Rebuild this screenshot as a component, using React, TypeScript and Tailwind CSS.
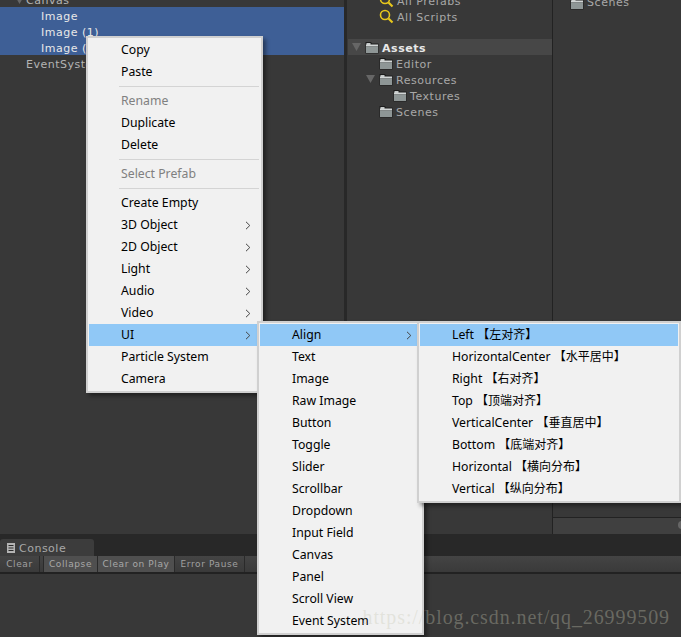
import React from "react";

const menuFont = "font-['Segoe_UI','Noto_Sans','Noto_Sans_CJK_SC',sans-serif]";

const mainMenu = [
  { label: "Copy" },
  { label: "Paste" },
  { sep: true },
  { label: "Rename", disabled: true },
  { label: "Duplicate" },
  { label: "Delete" },
  { sep: true },
  { label: "Select Prefab", disabled: true },
  { sep: true },
  { label: "Create Empty" },
  { label: "3D Object", arrow: true },
  { label: "2D Object", arrow: true },
  { label: "Light", arrow: true },
  { label: "Audio", arrow: true },
  { label: "Video", arrow: true },
  { label: "UI", arrow: true, active: true },
  { label: "Particle System" },
  { label: "Camera" },
];

const uiMenu = [
  { label: "Align", arrow: true, active: true },
  { label: "Text" },
  { label: "Image" },
  { label: "Raw Image" },
  { label: "Button" },
  { label: "Toggle" },
  { label: "Slider" },
  { label: "Scrollbar" },
  { label: "Dropdown" },
  { label: "Input Field" },
  { label: "Canvas" },
  { label: "Panel" },
  { label: "Scroll View" },
  { label: "Event System" },
];

const alignMenu = [
  { label: "Left ", cn: "【左对齐】", active: true },
  { label: "HorizontalCenter ", cn: "【水平居中】" },
  { label: "Right ", cn: "【右对齐】" },
  { label: "Top ", cn: "【顶端对齐】" },
  { label: "VerticalCenter ", cn: "【垂直居中】" },
  { label: "Bottom ", cn: "【底端对齐】" },
  { label: "Horizontal ", cn: "【横向分布】" },
  { label: "Vertical ", cn: "【纵向分布】" },
];

type Item = {
  label?: string;
  cn?: string;
  sep?: boolean;
  disabled?: boolean;
  arrow?: boolean;
  active?: boolean;
};

const Chevron = () => (
  <svg width="6" height="9" viewBox="0 0 6 9" fill="none" className="absolute right-[9px] top-[7px]">
    <path d="M1 0.8 L4.8 4.5 L1 8.2" stroke="#444" strokeWidth="1" />
  </svg>
);

const Menu = ({ items, className }: { items: Item[]; className: string }) => (
  <div
    className={`absolute border-2 border-[#d0d0d0] bg-[#f1f1f1] p-px shadow-[3px_3px_4px_rgba(0,0,0,0.4)] ${menuFont} ${className}`}
  >
    {items.map((item, i) =>
      item.sep ? (
        <div key={i} className="flex h-[7px] items-center pl-[30px] pr-px">
          <div className="h-px w-full bg-[#d4d4d4]" />
        </div>
      ) : (
        <div
          key={i}
          className={`relative h-[22px] whitespace-pre pl-[32px] text-[12.25px] leading-[22px] ${
            item.disabled ? "text-[#808080]" : "text-black"
          } ${item.active ? "bg-[#90c8f6]" : ""}`}
        >
          {item.label}
          {item.cn && <span className="text-[12px]">{item.cn}</span>}
          {item.arrow && <Chevron />}
        </div>
      )
    )}
  </div>
);

const Folder = () => (
  <svg width="14" height="13" viewBox="0 0 14 13" className="shrink-0">
    <path d="M0.5 1 H6 L7 2.5 H13.5 V12.5 H0.5 Z" fill="#1c1c1c" />
    <rect x="1.5" y="2" width="4" height="2" fill="#c4c8c8" />
    <rect x="1" y="3.5" width="12" height="2" fill="#d2d6d6" />
    <rect x="1" y="5.5" width="12" height="6.5" fill="#8e9696" />
  </svg>
);

const Search = () => (
  <svg width="15" height="15" viewBox="0 0 15 15" fill="none" className="shrink-0">
    <circle cx="6" cy="6" r="4.5" stroke="#e8c81c" strokeWidth="1.6" />
    <path d="M9.5 9.5 L13.5 13.5" stroke="#e8c81c" strokeWidth="2.2" />
  </svg>
);

const Tri = () => (
  <svg width="9" height="8" viewBox="0 0 9 8" className="shrink-0">
    <path d="M0 0 H9 L4.5 8 Z" fill="#666666" />
  </svg>
);

const TreeRow = ({ label, pad, selected }: { label: string; pad: string; selected?: boolean }) => (
  <div
    className={`h-[16px] text-[11px] leading-[19px] tracking-[0.5px] ${pad} ${
      selected ? "bg-[#3e5f96] text-[#e8e8e8]" : "text-[#b4b4b4]"
    }`}
  >
    {label}
  </div>
);

const FolderRow = ({
  label,
  pad,
  open,
  bold,
}: {
  label: string;
  pad: string;
  open?: boolean;
  bold?: boolean;
}) => (
  <div
    className={`flex h-[16px] items-center gap-[3px] text-[11px] tracking-[0.55px] ${pad} ${
      bold ? "bg-[#474747] font-bold text-[#e8e8e8]" : "text-[#a8a8a8]"
    }`}
  >
    {open && (
      <span className="mr-px -ml-[13px] flex">
        <Tri />
      </span>
    )}
    <Folder />
    <span className="pt-[4px]">{label}</span>
  </div>
);

const ToolButton = ({ label, on, className }: { label: string; on?: boolean; className: string }) => (
  <div
    className={`flex h-full items-center justify-center border-r border-[#2a2a2a] pt-px text-[9px] tracking-[0.6px] ${
      on ? "bg-[#4f4f4f] text-[#a8a8a8]" : "text-[#a0a0a0]"
    } ${className}`}
  >
    {label}
  </div>
);

export default function App() {
  return (
    <div className="relative flex h-[637px] w-[681px] flex-col overflow-hidden bg-[#383838] font-['DejaVu_Sans',sans-serif]">
      <div className="flex h-[535px] border-b border-[#282828]">
        <div className="-mt-[9px] w-[344px]">
          <div className="relative h-[16px] pl-[26px] text-[11px] leading-[19px] tracking-[0.5px] text-[#b4b4b4]">
            <span className="absolute left-[15px] top-[5px] flex">
              <Tri />
            </span>
            Canvas
          </div>
          <TreeRow label="Image" pad="pl-[41px]" selected />
          <TreeRow label="Image (1)" pad="pl-[41px]" selected />
          <TreeRow label="Image (2)" pad="pl-[41px]" selected />
          <TreeRow label="EventSystem" pad="pl-[26px]" />
        </div>
        <div className="w-[209px] border-r border-l-[3px] border-r-[#222222] border-l-[#282828] pl-px">
          <div className="-mt-[8px] flex h-[16px] items-center gap-[3px] pl-[31px] text-[11px] tracking-[0.55px] text-[#a8a8a8]">
            <Search />
            <span className="pt-[4px]">All Prefabs</span>
          </div>
          <div className="flex h-[16px] items-center gap-[3px] pl-[31px] text-[11px] tracking-[0.55px] text-[#a8a8a8]">
            <Search />
            <span className="pt-[4px]">All Scripts</span>
          </div>
          <div className="mt-[15px]">
            <FolderRow label="Assets" pad="pl-[17px]" open bold />
            <FolderRow label="Editor" pad="pl-[31px]" />
            <FolderRow label="Resources" pad="pl-[31px]" open />
            <FolderRow label="Textures" pad="pl-[45px]" />
            <FolderRow label="Scenes" pad="pl-[31px]" />
          </div>
        </div>
        <div className="flex flex-1 flex-col">
          <div className="-mt-[5px] flex h-[16px] items-center gap-[3px] pl-[17px] text-[11px] tracking-[0.55px] text-[#a8a8a8]">
            <Folder />
            <span>Scenes</span>
          </div>
          <div className="relative mt-auto h-[17px] border-t border-[#222222] bg-[#404040]">
            <div className="absolute -right-[5px] top-[3px] h-[8px] w-[8px] rounded-full bg-[#666666]" />
          </div>
        </div>
      </div>

      <div className="h-[21px] bg-[#282828] pt-[4px]">
        <div className="flex h-[17px] w-[94px] items-center gap-[4px] rounded-t-[3px] bg-[#3c3c3c] pl-[7px] text-[11px] tracking-[0.5px] text-[#a8a8a8]">
          <svg width="8" height="10" viewBox="0 0 8 10" className="shrink-0">
            <rect width="8" height="10" fill="#b4b4b4" />
            <path d="M1.5 2.5 H6.5 M1.5 5 H6.5 M1.5 7.5 H6.5" stroke="#2a2a2a" strokeWidth="1" />
          </svg>
          <span className="pt-[4px]">Console</span>
        </div>
      </div>
      <div className="flex h-[18px] border-b-2 border-[#222222] bg-gradient-to-b from-[#444444] to-[#3a3a3a]">
        <ToolButton label="Clear" className="w-[40px]" />
        <div className="w-[4px] border-r border-[#2a2a2a]" />
        <ToolButton label="Collapse" on className="w-[54px]" />
        <ToolButton label="Clear on Play" on className="w-[77px]" />
        <ToolButton label="Error Pause" className="w-[70px]" />
      </div>

      <Menu items={mainMenu} className="left-[86px] top-[36px] w-[177px]" />
      <Menu items={uiMenu} className="left-[257px] top-[321px] w-[167px]" />
      <Menu items={alignMenu} className="left-[417px] top-[321px] w-[264px]" />

      <div className="pointer-events-none absolute bottom-[8px] right-[11px] whitespace-nowrap font-['Liberation_Serif',serif] text-[20px] leading-[24px] tracking-[0.9px] text-[#c8c8b4]/35">
        https://blog.csdn.net/qq_26999509
      </div>
    </div>
  );
}
